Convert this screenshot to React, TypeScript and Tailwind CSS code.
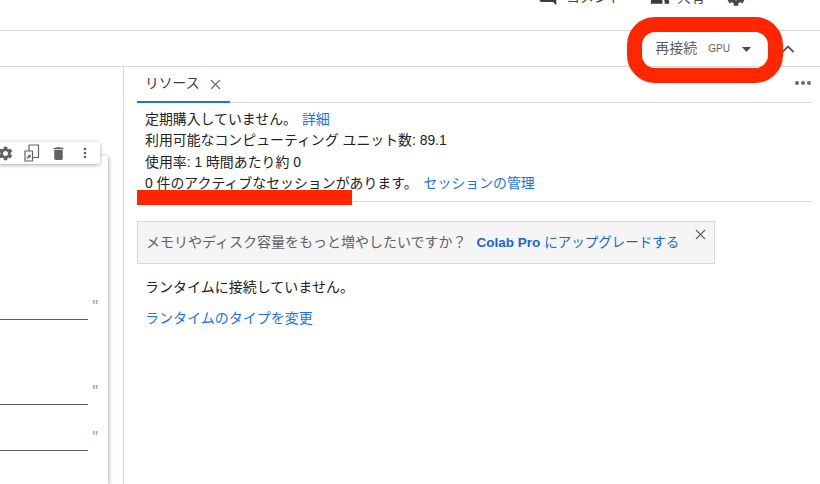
import { X, ChevronUp } from "lucide-react";

const FONT = "font-['Liberation_Sans','Noto_Sans_CJK_JP',sans-serif]";
const GEAR =
  "M19.14 12.94c.04-.3.06-.61.06-.94 0-.32-.02-.64-.07-.94l2.03-1.58c.18-.14.23-.41.12-.61l-1.92-3.32c-.12-.22-.37-.29-.59-.22l-2.39.96c-.5-.38-1.03-.7-1.62-.94l-.36-2.54c-.04-.24-.24-.41-.48-.41h-3.84c-.24 0-.43.17-.47.41l-.36 2.54c-.59.24-1.13.57-1.62.94l-2.39-.96c-.22-.08-.47 0-.59.22L2.74 8.87c-.12.21-.08.47.12.61l2.03 1.58c-.05.3-.09.63-.09.94s.02.64.07.94l-2.03 1.58c-.18.14-.23.41-.12.61l1.92 3.32c.12.22.37.29.59.22l2.39-.96c.5.38 1.03.7 1.62.94l.36 2.54c.05.24.24.41.48.41h3.84c.24 0 .44-.17.47-.41l.36-2.54c.59-.24 1.13-.56 1.62-.94l2.39.96c.22.08.47 0 .59-.22l1.92-3.32c.12-.22.07-.47-.12-.61l-2.01-1.58zM12 15.6c-1.98 0-3.6-1.62-3.6-3.6s1.62-3.6 3.6-3.6 3.6 1.62 3.6 3.6-1.62 3.6-3.6 3.6z";

function Gear({ size, color }: { size: number; color: string }) {
  return (
    <svg width={size} height={size} viewBox="0 0 24 24" className="shrink-0">
      <path d={GEAR} fill={color} />
    </svg>
  );
}

function CellLine({ gap }: { gap: string }) {
  return (
    <div className={`${gap} flex flex-col`}>
      <div className="h-[20px] flex justify-end pr-[9px]">
        <span className="font-['Liberation_Mono',monospace] font-bold text-[13px] leading-[14px] text-[#a8a8a8]">"</span>
      </div>
      <div className="h-px w-[88px] bg-[#5f5f5f]" />
    </div>
  );
}

export default function App() {
  return (
    <div className={`${FONT} relative w-[820px] h-[484px] overflow-hidden bg-white flex flex-col text-[14px] text-[#212121]`}>
      {/* top bar */}
      <div className="h-[31px] shrink-0 border-b border-[#dadada] overflow-hidden flex justify-end items-start">
        <div className="flex items-center mt-[-14px] text-[#444444] text-[14px] leading-[20px] pr-[73px]">
          <svg width="20" height="20" viewBox="0 0 24 24" className="mr-[8px]">
            <path d="M21.99 4c0-1.1-.89-2-1.99-2H4c-1.1 0-2 .9-2 2v12c0 1.1.9 2 2 2h14l4 4-.01-18z" fill="#3c3c3c" />
          </svg>
          <span className="w-[84px]">コメント</span>
          <svg width="20" height="20" viewBox="0 0 24 24" className="mr-[7px]">
            <path d="M16 11a4 4 0 1 0-3.2-6.4A6 6 0 0 1 13 11zM8 11a4 4 0 1 0 0-8 4 4 0 0 0 0 8zm0 2c-3 0-7 1.5-7 4.500V20h14v-2.500C15 14.500 11 13 8 13zm8 0h-1c1.500 1 2.500 2.500 2.500 4.500V20H23v-2.500c0-3-4-4.500-7-4.500z" fill="#3c3c3c" />
          </svg>
          <span className="w-[48px]">共有</span>
          <Gear size={22} color="#4a4a4a" />
        </div>
      </div>
      {/* toolbar */}
      <div className="h-[36px] shrink-0 border-b border-[#dadada] flex items-center justify-end pr-[24px]">
        <div className="flex items-center h-[30px] text-[#5f5f5f] mt-[-1px]">
          <span className="text-[14px]">再接続</span>
          <span className="text-[10px] ml-[11px]">GPU</span>
          <svg width="10" height="5" viewBox="0 0 10 5" className="ml-[12px] mr-[26px] mt-[2px]">
            <path d="M0 0h9L4.500 5z" fill="#4a4a4a" />
          </svg>
        </div>
        <ChevronUp size={20} strokeWidth={2.2} className="text-[#5a5a5a] mr-[-2px]" />
      </div>
      {/* body */}
      <div className="flex-1 flex min-h-0">
        {/* notebook */}
        <div className="w-[124px] shrink-0 border-r border-[#dadada] bg-white flex">
          <div className="relative w-[108px] shrink-0 mt-[89px] bg-white shadow-[1px_1px_4px_rgba(0,0,0,0.3)] flex flex-col">
            <div className="absolute right-[8px] top-[-14px] w-[110px] h-[22px] rounded-[3px] bg-white shadow-[0_1px_4px_rgba(0,0,0,0.35)] flex items-center justify-end pr-[7px] text-[#616161]">
              <Gear size={17} color="#616161" />
              <svg width="16" height="18" viewBox="0 0 16 18" fill="none" stroke="#616161" strokeWidth="1.2" className="ml-[10px]">
                <path d="M5 1h9.500v12.500H9M5 1v6M1 7h7.500v10H1z" />
                <path d="M3 14.500l3-3M4 11.500h2v2" />
              </svg>
              <svg width="17" height="17" viewBox="0 0 24 24" className="ml-[10px]">
                <path d="M6 19c0 1.100.9 2 2 2h8c1.100 0 2-.9 2-2V7H6v12zM19 4h-3.500l-1-1h-5l-1 1H5v2h14V4z" fill="#616161" />
              </svg>
              <svg width="16" height="16" viewBox="0 0 24 24" className="ml-[10px]">
                <path d="M12 8a2 2 0 1 0 0-4 2 2 0 0 0 0 4zm0 2a2 2 0 1 0 0 4 2 2 0 0 0 0-4zm0 6a2 2 0 1 0 0 4 2 2 0 0 0 0-4z" fill="#616161" />
              </svg>
            </div>
            <CellLine gap="mt-[143px]" />
            <CellLine gap="mt-[64px]" />
            <CellLine gap="mt-[25px]" />
          </div>
        </div>
        {/* resources */}
        <div className="flex-1 min-w-0 pl-[13px] pr-[8px]">
          <div className="relative h-[36px] border-b border-[#dadada] flex">
            <div className="w-[93px] h-[36px] border-b-2 border-[#1a73e8] flex items-center pl-[8px]">
              <span className="text-[13.8px] text-[#3c3c3c]">リソース</span>
              <X size={17} strokeWidth={1.5} className="ml-[7px] text-[#6a6a6a]" />
            </div>
            <svg width="24" height="24" viewBox="0 0 24 24" className="absolute right-[-3px] top-[4px]">
              <path d="M6 10a2 2 0 1 0 0 4 2 2 0 0 0 0-4zm12 0a2 2 0 1 0 0 4 2 2 0 0 0 0-4zm-6 0a2 2 0 1 0 0 4 2 2 0 0 0 0-4z" fill="#6a6a6a" />
            </svg>
          </div>
          <div className="pl-[8px] pt-[6px] pb-[7px] border-b border-[#dadada] text-[13.9px] leading-[21.3px]">
            <div>
              定期購入していません。<a className="text-[#1a73e8] ml-[5px]">詳細</a>
            </div>
            <div>利用可能なコンピューティング ユニット数: 89.1</div>
            <div>使用率: 1 時間あたり約 0</div>
            <div>
              0 件のアクティブなセッションがあります。<a className="text-[#1a73e8] ml-[6px]">セッションの管理</a>
            </div>
          </div>
          <div className="relative mt-[19px] w-[578px] h-[43px] bg-[#f5f5f5] border border-[#dadada] flex items-center pl-[8px] text-[#616161]">
            <span>メモリやディスク容量をもっと増やしたいですか？</span>
            <a className="ml-[10px] text-[13.5px] text-[#1967d2]"><span className="font-bold">Colab Pro</span> にアップグレードする</a>
            <X size={17} strokeWidth={1.5} className="absolute right-[5px] top-[4px] text-[#5f5f5f]" />
          </div>
          <div className="pl-[8px] mt-[13px] leading-[21px]">ランタイムに接続していません。</div>
          <div className="pl-[8px] mt-[10px] leading-[21px] text-[#1a73e8]">ランタイムのタイプを変更</div>
        </div>
      </div>
      {/* red annotations */}
      <div className="absolute left-[627px] top-[17px] w-[156px] h-[66px] rounded-[28px] border-[15px] border-[#ff2600]" />
      <div className="absolute left-[137px] top-[190px] w-[215px] h-[15px] bg-[#ff2600]" />
    </div>
  );
}
